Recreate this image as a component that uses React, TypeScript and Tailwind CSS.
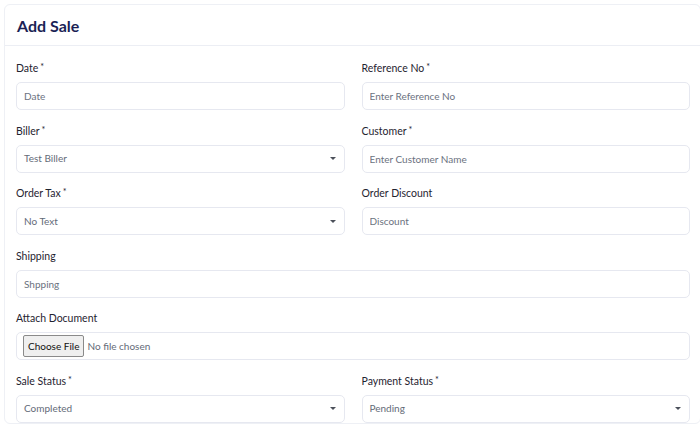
type Field = {
  label: string;
  required?: boolean;
  kind: 'text' | 'select' | 'file';
  placeholder?: string;
  value?: string;
  full?: boolean;
};

const fields: Field[] = [
  { label: 'Date', required: true, kind: 'text', placeholder: 'Date' },
  { label: 'Reference No', required: true, kind: 'text', placeholder: 'Enter Reference No' },
  { label: 'Biller', required: true, kind: 'select', value: 'Test Biller' },
  { label: 'Customer', required: true, kind: 'text', placeholder: 'Enter Customer Name' },
  { label: 'Order Tax', required: true, kind: 'select', value: 'No Text' },
  { label: 'Order Discount', kind: 'text', placeholder: 'Discount' },
  { label: 'Shipping', kind: 'text', placeholder: 'Shpping', full: true },
  { label: 'Attach Document', kind: 'file', full: true },
  { label: 'Sale Status', required: true, kind: 'select', value: 'Completed' },
  { label: 'Payment Status', required: true, kind: 'select', value: 'Pending' },
];

function Caret() {
  return (
    <svg width="6" height="3" viewBox="0 0 6 3" className="shrink-0">
      <path d="M0 0h6L3 3z" fill="#4b505a" />
    </svg>
  );
}

function Control({ field }: { field: Field }) {
  const box =
    'h-[28px] w-full rounded-[5px] border border-[#e6e8f0] bg-white text-[10px] text-[#646b78] flex items-center';

  if (field.kind === 'select') {
    return (
      <div className={`${box} justify-between pl-[7px] pr-[8px]`}>
        <span>{field.value}</span>
        <Caret />
      </div>
    );
  }

  if (field.kind === 'file') {
    return (
      <div className={`${box} pl-[6px]`}>
        <input
          type="file"
          className="text-[10px] text-[#646b78] file:mr-[3px] file:h-[22px] file:px-[4px] file:bg-[#efefef] file:border file:border-solid file:border-[#8a8a8a] file:rounded-[2px] file:text-[10px] file:text-[#111]"
        />
      </div>
    );
  }

  return (
    <input
      type="text"
      placeholder={field.placeholder}
      className={`${box} px-[7px] outline-none placeholder:text-[#6b7280]`}
    />
  );
}

export default function App() {
  return (
    <div className="min-h-[435px] bg-white pl-[4px] pt-[4px]" style={{ fontFamily: 'Lato, "Noto Sans", sans-serif' }}>
      <div className="w-[697px] rounded-[6px] border border-[#eef0f5] bg-white">
        <div className="h-[41px] flex items-center px-[12px] border-b border-[#eceef4]">
          <h1 className="text-[16px] font-bold text-[#1b1f55] mt-[1px]">Add Sale</h1>
        </div>
        <div className="pl-[11px] pr-[10px] pt-[15px] grid grid-cols-2 gap-x-[17px] gap-y-[13.6px]">
          {fields.map((f) => (
            <div key={f.label} className={f.full ? 'col-span-2' : ''}>
              <label className="flex items-start gap-[2px] h-[14px] text-[10.5px] leading-[14px] text-[#1f2430] mb-[7px]">
                <span>{f.label}</span>
                {f.required && <span className="text-[9px] leading-[12px]">*</span>}
              </label>
              <Control field={f} />
            </div>
          ))}
        </div>
      </div>
    </div>
  );
}
